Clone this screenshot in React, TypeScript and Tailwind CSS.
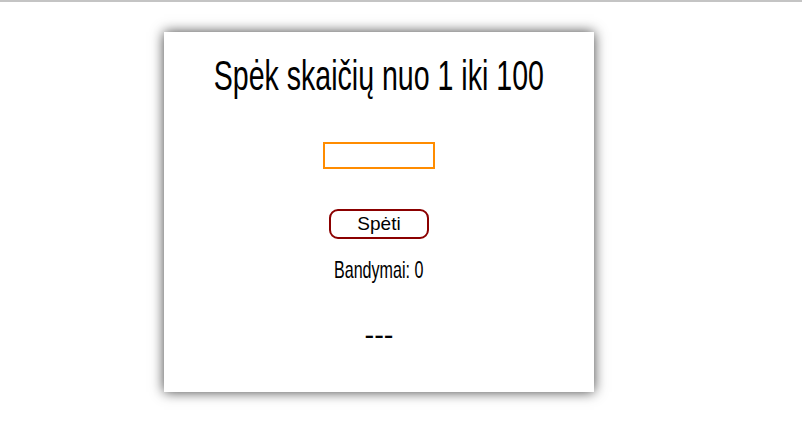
import React from "react";

const sans = { fontFamily: '"Liberation Sans", Arial, sans-serif' } as const;

export default function App() {
  return (
    <div className="w-[802px] h-[444px] bg-white overflow-hidden">
      <div className="h-[2px] bg-[#c4c4c4]" />
      <div className="ml-[164px] mt-[30px] w-[430px] h-[360px] bg-white shadow-[0_0_12px_rgba(0,0,0,0.75)] flex flex-col items-center">
        <h1
          className="mt-[20px] inline-block whitespace-nowrap text-[42px] leading-[48px] text-black scale-x-[0.68]"
          style={sans}
        >
          Spėk skaičių nuo 1 iki 100
        </h1>
        <input
          type="text"
          className="mt-[42px] w-[112px] h-[27px] border-2 border-[#ff8c00] outline-none bg-white"
        />
        <button
          className="mt-[40px] w-[100px] h-[30px] border-2 border-[#8b0000] rounded-[9px] bg-white text-[19px] leading-[24px] text-black"
          style={sans}
        >
          Spėti
        </button>
        <p
          className="mt-[17px] inline-block whitespace-nowrap text-[24px] leading-[28px] text-black scale-x-[0.67]"
          style={sans}
        >
          Bandymai: 0
        </p>
        <p
          className="mt-[34px] inline-block whitespace-nowrap text-[29px] leading-[34px] text-black"
          style={sans}
        >
          ---
        </p>
      </div>
    </div>
  );
}
